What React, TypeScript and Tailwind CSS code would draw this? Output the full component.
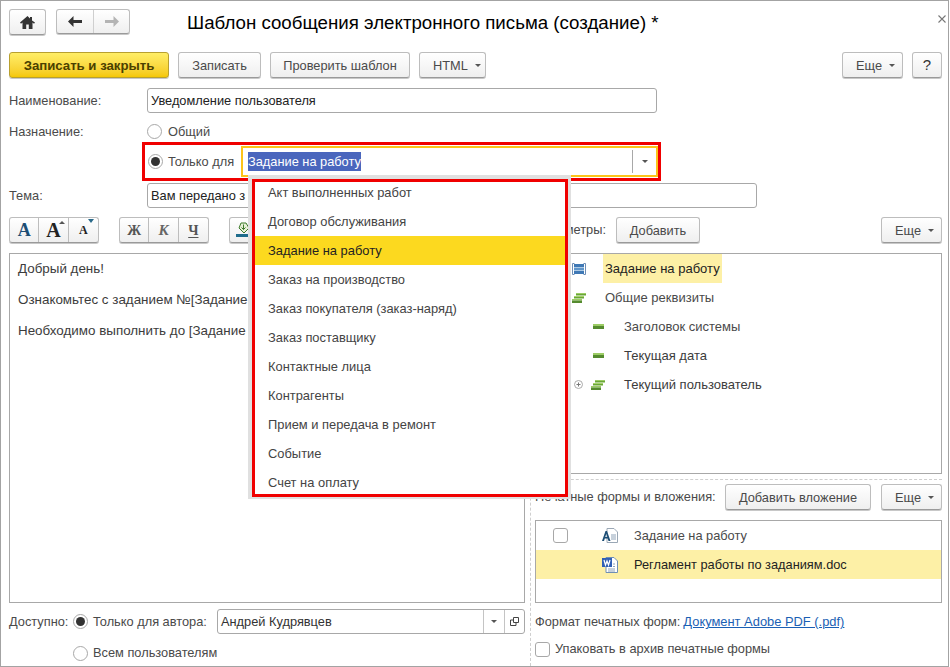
import { ReactNode } from "react";

const items = [
  "Акт выполненных работ",
  "Договор обслуживания",
  "Задание на работу",
  "Заказ на производство",
  "Заказ покупателя (заказ-наряд)",
  "Заказ поставщику",
  "Контактные лица",
  "Контрагенты",
  "Прием и передача в ремонт",
  "Событие",
  "Счет на оплату",
];

function Caret({ className = "" }: { className?: string }) {
  return (
    <svg width="6" height="3" viewBox="0 0 6 3" className={className}>
      <path d="M0 0h6L3 3z" fill="#555" />
    </svg>
  );
}

function Btn({
  children,
  className = "",
  menu,
}: {
  children: ReactNode;
  className?: string;
  menu?: boolean;
}) {
  return (
    <button className={`flex h-[26px] items-center rounded-[3px] border border-[#bdbdbd] border-b-[#9a9a9a] bg-gradient-to-b from-white to-[#efefef] pt-px text-[#4a4a4a] shadow-[0_1px_0_#c8c8c8] ${menu ? "justify-start pl-[13px]" : "justify-center"} ${className}`}>
      {children}
      {menu && <Caret className="ml-[7px]" />}
    </button>
  );
}

function Radio({ on }: { on?: boolean }) {
  return (
    <span className="flex h-[15px] w-[15px] shrink-0 items-center justify-center rounded-full border border-[#a8a8a8] bg-white">
      {on && <span className="h-[9px] w-[9px] rounded-full bg-[#333]" />}
    </span>
  );
}

function Check() {
  return <span className="block h-[15px] w-[15px] shrink-0 rounded-[3px] border border-[#a8a8a8] bg-white" />;
}

function Input({ value, className = "" }: { value: string; className?: string }) {
  return (
    <div className={`flex h-[25px] items-center rounded-[3px] border border-[#a8a8a8] bg-white pl-[3px] text-[#222] ${className}`}>
      {value}
    </div>
  );
}

function GroupBtn({ children, last }: { children: ReactNode; last?: boolean }) {
  return (
    <span className={`flex h-full w-[30px] items-center justify-center ${last ? "" : "border-r border-[#bdbdbd]"}`}>
      {children}
    </span>
  );
}

function Group({ children, className = "" }: { children: ReactNode; className?: string }) {
  return (
    <div className={`flex h-[26px] w-[90px] items-center rounded-[3px] border border-[#bdbdbd] border-b-[#9a9a9a] bg-gradient-to-b from-white to-[#efefef] shadow-[0_1px_0_#c8c8c8] ${className}`}>
      {children}
    </div>
  );
}

function StackIcon() {
  return (
    <svg width="14" height="10" viewBox="0 0 14 10" className="shrink-0">
      <rect x="4" y="0" width="10" height="1" fill="#9ccc65" />
      <rect x="4" y="1" width="10" height="1.500" fill="#6aa636" />
      <rect x="2" y="3" width="10" height="1" fill="#a5d46a" />
      <rect x="2" y="4" width="10" height="1.500" fill="#6aa636" />
      <rect x="0" y="6" width="10" height="1.500" fill="#9ccc65" />
      <rect x="0" y="7.500" width="10" height="2.500" fill="#558b2f" />
    </svg>
  );
}

function DashIcon() {
  return (
    <svg width="11" height="5" viewBox="0 0 11 5" className="shrink-0">
      <rect width="11" height="2" fill="#9ccc65" />
      <rect y="2" width="11" height="3" fill="#558b2f" />
    </svg>
  );
}

function TableIcon() {
  return (
    <svg width="14" height="12" viewBox="0 0 14 12" className="shrink-0">
      <path d="M2.500.5h-2v11h2M11.500.5h2v11h-2" stroke="#6c8db5" fill="none" />
      <rect x="2" y="1" width="10" height="3" fill="#3f78b5" />
      <rect x="2" y="4.500" width="10" height="3" fill="#5f95c9" />
      <rect x="2" y="8" width="10" height="3" fill="#3f78b5" />
    </svg>
  );
}

export default function App() {
  return (
    <div className="relative h-[667px] w-[950px] overflow-hidden bg-white font-['Liberation_Sans',Arial,sans-serif] text-[12.8px] text-[#4a4a4a]">
      <div className="flex h-[667px] w-[949px] flex-col border border-[#a3a3a3] pl-2 pr-[6px] pt-2">
        {/* header */}
        <div className="flex h-[25px] items-center">
          <Btn className="h-[25px] w-[37px]">
            <svg width="15" height="13" viewBox="0 0 15 13">
              <path d="M7.500 0 0 6.600l1 1.100L2.500 6.400V13h3.700V8.600h2.600V13h3.700V6.400l1.500 1.300 1-1.100L12 4.400V1h-2v1.600z" fill="#333" />
            </svg>
          </Btn>
          <div className="ml-[10px] flex h-[25px] w-[74px] items-center rounded-[3px] border border-[#bdbdbd] border-b-[#9a9a9a] bg-gradient-to-b from-white to-[#efefef] shadow-[0_1px_0_#c8c8c8]">
            <span className="flex h-full w-[37px] items-center justify-center border-r border-[#cfcfcf]">
              <svg width="14" height="11" viewBox="0 0 14 11">
                <path d="M5.500 0 0 5.500 5.500 11V7H14V4H5.500z" fill="#333" />
              </svg>
            </span>
            <span className="flex h-full flex-1 items-center justify-center">
              <svg width="14" height="11" viewBox="0 0 14 11">
                <path d="M8.500 0 14 5.500 8.500 11V7H0V4h8.500z" fill="#b4b4b4" />
              </svg>
            </span>
          </div>
          <h1 className="ml-[57px] mt-[3px] whitespace-nowrap text-[18.7px] leading-none text-black">Шаблон сообщения электронного письма (создание) *</h1>
          <svg width="8" height="8" viewBox="0 0 8 8" className="mb-[6px] ml-auto mr-[-4px]">
            <path d="M.5.5l7 7M7.500.5l-7 7" stroke="#777" strokeWidth="1.100" />
          </svg>
        </div>

        {/* command bar */}
        <div className="mt-[18px] flex h-[26px] items-center">
          <button className="flex h-[26px] w-[160px] items-center justify-center rounded-[3px] border border-[#b8a030] bg-gradient-to-b from-[#ffee66] to-[#f5c800] pt-px text-[13.2px] font-bold text-[#4a4000] shadow-[0_1px_0_#c8c8c8]">
            Записать и закрыть
          </button>
          <Btn className="ml-[9px] w-[83px]">Записать</Btn>
          <Btn className="ml-[9px] w-[140px]">Проверить шаблон</Btn>
          <Btn className="ml-[9px] w-[67px]" menu>HTML</Btn>
          <Btn className="ml-auto w-[61px]" menu>Еще</Btn>
          <Btn className="ml-[9px] w-[30px] text-[15px] text-[#333]">?</Btn>
        </div>

        {/* fields */}
        <div className="mt-[10px] flex h-[25px] items-center">
          <span className="w-[138px]">Наименование:</span>
          <Input value="Уведомление пользователя" className="w-[510px]" />
        </div>
        <div className="mt-[8px] flex h-[21px] items-center">
          <span className="w-[138px]">Назначение:</span>
          <Radio />
          <span className="ml-[6px]">Общий</span>
        </div>
        <div className="ml-[133px] flex h-[39px] w-[519px] items-center border-[3px] border-[#f00000] pl-[3px]">
          <Radio on />
          <span className="ml-[5px] w-[73px]">Только для</span>
          <div className="flex h-[31px] w-[417px] items-center border-2 border-[#fcc419] pl-[5px]">
            <span className="bg-[#4a66bd] text-white">Задание на работу</span>
            <span className="ml-auto h-[23px] w-px bg-[#a8a8a8]" />
            <span className="flex w-[23px] justify-center">
              <Caret />
            </span>
          </div>
        </div>
        <div className="mt-[2px] flex h-[25px] items-center">
          <span className="w-[138px]">Тема:</span>
          <Input value="Вам передано з" className="w-[610px]" />
        </div>

        {/* columns */}
        <div className="mt-[9px] flex min-h-0 flex-1">
          <div className="flex w-[516px] shrink-0 flex-col">
            <div className="flex h-[26px] items-center">
              <Group>
                <GroupBtn><span className="font-['Liberation_Serif',serif] text-[18px] font-bold leading-none text-[#1d4e75]">A</span></GroupBtn>
                <GroupBtn>
                  <span className="relative font-['Liberation_Serif',serif] text-[20px] font-bold leading-none text-[#222]">
                    A
                    <Caret className="absolute right-[-4px] top-[1px] rotate-180" />
                  </span>
                </GroupBtn>
                <GroupBtn last>
                  <span className="relative font-['Liberation_Serif',serif] text-[12px] font-bold leading-none text-[#222]">
                    A
                    <svg width="6" height="4" viewBox="0 0 6 4" className="absolute right-[-6px] top-[-5px]">
                      <path d="M0 0h6L3 4z" fill="#2a6a8a" />
                    </svg>
                  </span>
                </GroupBtn>
              </Group>
              <Group className="ml-5">
                <GroupBtn><span className="font-['Liberation_Serif',serif] text-[14px] font-bold text-[#555]">Ж</span></GroupBtn>
                <GroupBtn><span className="font-['Liberation_Serif',serif] text-[15px] font-bold italic text-[#666]">К</span></GroupBtn>
                <GroupBtn last><span className="font-['Liberation_Serif',serif] text-[14px] font-bold text-[#555] underline underline-offset-2">Ч</span></GroupBtn>
              </Group>
              <Btn className="ml-5 w-[30px]">
                <svg width="16" height="18" viewBox="0 0 16 18">
                  <path d="M5 1h5l3 5-5 5-5-5z" fill="#e8f0d8" stroke="#3d7a2a" />
                  <path d="M7.500 2.500v5M5.500 5.500l2 2 2-2" fill="none" stroke="#3d7a2a" />
                  <rect x="0" y="12" width="16" height="3" fill="#1f6c8c" />
                </svg>
              </Btn>
            </div>
            <div className="mt-[10px] h-[350px] border border-[#a8a8a8] px-2 pt-[7px] text-[13.4px] leading-[15px] text-[#3c3c3c]">
              <p>Добрый день!</p>
              <p className="mt-[16px]">Ознакомьтес с заданием №[Задание</p>
              <p className="mt-[16px]">Необходимо выполнить до [Задание</p>
            </div>
            <div className="mt-[6px] flex h-[25px] items-center">
              <span className="w-[64px]">Доступно:</span>
              <Radio on />
              <span className="ml-[5px] w-[124px]">Только для автора:</span>
              <div className="flex h-[25px] w-[308px] items-center rounded-[3px] border border-[#a8a8a8] pl-[3px] text-[#333]">
                Андрей Кудрявцев
                <span className="ml-auto flex h-full w-[21px] items-center justify-center border-l border-[#c4c4c4]">
                  <Caret />
                </span>
                <span className="flex h-full w-[20px] items-center justify-center border-l border-[#c4c4c4]">
                  <svg width="9" height="9" viewBox="0 0 9 9">
                    <path d="M3.500.5h5v5h-5zM3.500 3H.5v5.500H6V6" fill="none" stroke="#444" />
                  </svg>
                </span>
              </div>
            </div>
            <div className="ml-[64px] mt-[8px] flex h-[22px] items-center">
              <Radio />
              <span className="ml-[5px]">Всем пользователям</span>
            </div>
          </div>

          <div className="ml-[5px] flex min-w-0 flex-1 flex-col border-l border-dashed border-[#cfcfcf] pl-[4px]">
            <div className="flex h-[26px] items-center">
              <span className="ml-[24px] w-[47px] text-right">метры:</span>
              <Btn className="ml-[10px] w-[84px]">Добавить</Btn>
              <Btn className="ml-auto w-[61px]" menu>Еще</Btn>
            </div>
            <div className="mt-[10px] h-[221px] border border-[#a8a8a8] text-[13px]">
              <div className="flex h-[29px] items-center pl-[36px]">
                <TableIcon />
                <span className="ml-[17px] flex h-[29px] items-center bg-[#fdf0a6] px-[2px] text-[#222]">Задание на работу</span>
              </div>
              <div className="flex h-[29px] items-center pl-[36px]">
                <StackIcon />
                <span className="ml-[19px]">Общие реквизиты</span>
              </div>
              <div className="flex h-[29px] items-center pl-[57px]">
                <DashIcon />
                <span className="ml-[20px]">Заголовок системы</span>
              </div>
              <div className="flex h-[29px] items-center pl-[57px]">
                <DashIcon />
                <span className="ml-[20px] text-[#3c3c3c]">Текущая дата</span>
              </div>
              <div className="flex h-[29px] items-center pl-[38px]">
                <svg width="9" height="9" viewBox="0 0 9 9" className="shrink-0">
                  <circle cx="4.500" cy="4.500" r="4" fill="none" stroke="#aaa" />
                  <path d="M2.500 4.500h4M4.500 2.500v4" stroke="#777" />
                </svg>
                <span className="ml-[8px]"><StackIcon /></span>
                <span className="ml-[19px] text-[#3c3c3c]">Текущий пользователь</span>
              </div>
            </div>
            <div className="ml-[-4px] mt-[5px] border-t border-dashed border-[#cfcfcf]" />
            <div className="mt-[4px] flex h-[26px] items-center">
              <span className="w-[190px]">Печатные формы и вложения:</span>
              <Btn className="w-[146px]">Добавить вложение</Btn>
              <Btn className="ml-auto w-[61px]" menu>Еще</Btn>
            </div>
            <div className="mt-[10px] h-[83px] border border-[#a8a8a8]">
              <div className="flex h-[29px] items-center pl-[17px]">
                <Check />
                <svg width="16" height="15" viewBox="0 0 16 15" className="ml-[34px] shrink-0">
                  <path d="M5 .5h7l3.500 3.500v10.500H5z" fill="#fff" stroke="#9aa7b5" />
                  <path d="M9 7h5M9 9h5M9 11h5" stroke="#8fa3b8" />
                  <path d="M0 13 3.500 3h1.500l3.500 10H6.500l-.8-2.500H2.800L2 13zM3.300 9h2L4.300 5.800z" fill="#1d4e75" />
                </svg>
                <span className="ml-[16px]">Задание на работу</span>
              </div>
              <div className="flex h-[29px] items-center bg-[#fdf0a6] pl-[66px] text-[#222]">
                <svg width="16" height="16" viewBox="0 0 16 16" className="shrink-0">
                  <path d="M4 .5h8l3.500 3.500v11.500H4z" fill="#fff" stroke="#6f8fb5" />
                  <path d="M6 12h7M6 14h7M11 7h2M11 9.500h2" stroke="#8fa3b8" />
                  <rect x="0" y="1" width="10" height="9" fill="#2f5fb5" />
                  <path d="M2 3l1.500 5L5 4l1.500 4L8 3" fill="none" stroke="#fff" strokeWidth="1.200" />
                </svg>
                <span className="ml-[16px]">Регламент работы по заданиям.doc</span>
              </div>
            </div>
            <div className="mt-[10px] flex h-[18px] items-center">
              <span>Формат печатных форм:</span>
              <a className="ml-[3px] text-[12.9px] text-[#1a5fb4] underline">Документ Adobe PDF (.pdf)</a>
            </div>
            <div className="mt-[9px] flex h-[18px] items-center">
              <Check />
              <span className="ml-[5px]">Упаковать в архив печатные формы</span>
            </div>
          </div>
        </div>
      </div>

      {/* открытый список */}
      <div className="absolute left-[248px] top-[175px] w-[323px] border-4 border-b-2 border-[#e0e0e0] border-r-[3px] bg-white">
        <div className="h-[318px] overflow-hidden border-[3px] border-[#f00000] bg-white text-[12.9px]">
          {items.map((item, i) => (
            <div
              key={item}
              className={`flex h-[29px] items-center pl-[13px] ${i === 0 ? "-mt-[4px]" : ""} ${item === "Задание на работу" ? "bg-[#fcd91f] text-[#222]" : "text-[#444]"}`}
            >
              {item}
            </div>
          ))}
        </div>
      </div>
    </div>
  );
}
